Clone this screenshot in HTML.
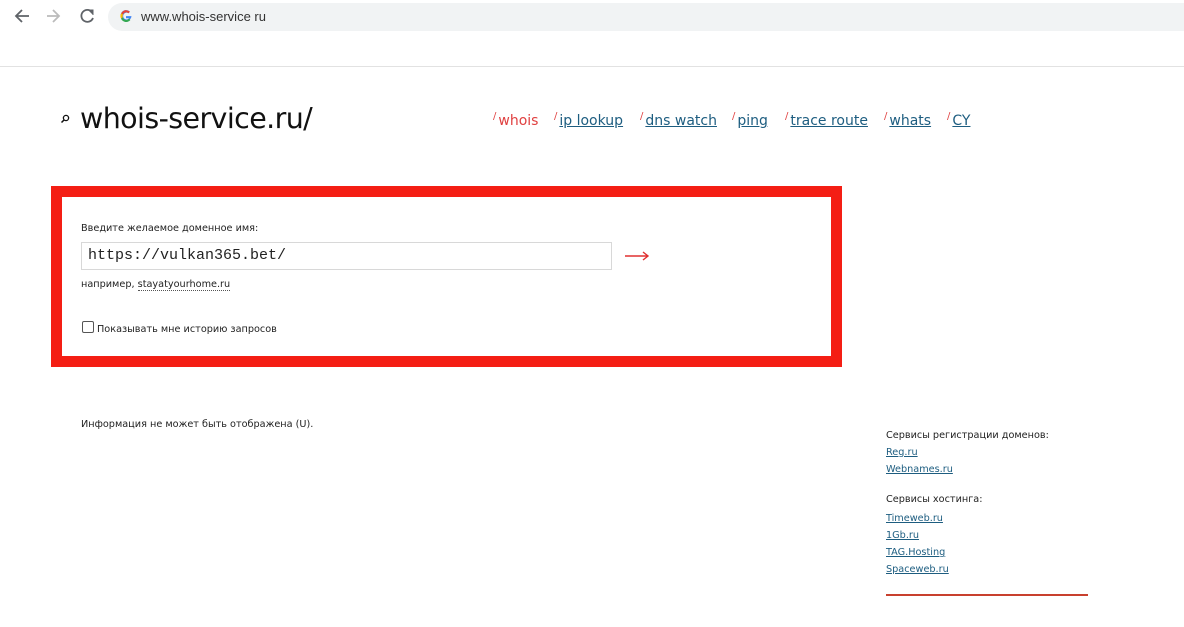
<!DOCTYPE html>
<html><head><meta charset="utf-8"><style>
*{margin:0;padding:0;box-sizing:border-box}
body{width:1184px;height:627px;background:#fff;position:relative;overflow:hidden;font-family:"DejaVu Sans","Liberation Sans",sans-serif;color:#222}
.abs{position:absolute}
a{color:#1d5d80;text-decoration:underline}
.bar{left:108px;top:3px;width:1090px;height:28px;border-radius:14px;background:#f1f3f4}
.url{left:141px;top:9px;font-family:"Liberation Sans",sans-serif;font-size:13px;color:#333}
.nav{top:111px;font-size:14px;font-family:"DejaVu Sans",sans-serif}
.nav span{color:#e04040;font-size:10px;vertical-align:6px;margin-right:2px}
.sm{font-size:9.7px;color:#222}
.side{left:886px;font-size:9.7px}
</style></head><body>
<svg class="abs" style="left:12px;top:6px" width="90" height="20" viewBox="0 0 90 20">
<path d="M17 10H5M10 4L4 10L10 16" fill="none" stroke="#5f6368" stroke-width="1.8"/>
<path d="M47 10H35M41 4L47 10L41 16" fill="none" stroke="#bbb" stroke-width="1.8"/>
<path d="M80 6A6 6 0 1 0 81 12" fill="none" stroke="#5f6368" stroke-width="1.8"/><path d="M76 4L81 4L81 9" fill="#5f6368" stroke="#5f6368" stroke-width="1"/>
</svg>
<div class="abs bar"></div>
<svg class="abs" style="left:119px;top:9px" width="14" height="14" viewBox="0 0 14 14">
<path d="M12.5 7.1H7v2.2h3.2A3.4 3.4 0 1 1 9.4 4.2l1.5-1.5A5.5 5.5 0 1 0 12.5 7.1z" fill="#4285f4"/>
<path d="M2.2 4.3L4 5.6A3.4 3.4 0 0 1 9.4 4.2l1.5-1.5A5.5 5.5 0 0 0 2.2 4.3z" fill="#ea4335"/>
<path d="M2 9.5L3.8 8.3A3.4 3.4 0 0 0 9.8 9.6l1.6 1.4A5.5 5.5 0 0 1 2 9.5z" fill="#34a853"/>
<path d="M2.2 4.3A5.5 5.5 0 0 0 2 9.5L3.8 8.3A3.4 3.4 0 0 1 4 5.6z" fill="#fbbc05"/>
</svg>
<div class="abs url">www.whois-service ru</div>
<div class="abs" style="left:0;top:66px;width:1184px;height:1px;background:#e2e2e2"></div>

<svg class="abs" style="left:60px;top:114px" width="10" height="10" viewBox="0 0 10 10"><circle cx="6" cy="4" r="2.6" fill="none" stroke="#111" stroke-width="1.3"/><path d="M4 6L1.5 8.5" stroke="#111" stroke-width="1.5"/></svg>
<div class="abs" style="left:80px;top:102px;font-size:28.5px;color:#111;font-family:'DejaVu Sans',sans-serif;letter-spacing:-0.6px">whois-service.ru/</div>

<div class="abs nav" style="left:493px;color:#e04040"><span>/</span>whois</div>
<div class="abs nav" style="left:554px"><span>/</span><a>ip lookup</a></div>
<div class="abs nav" style="left:640px"><span>/</span><a>dns watch</a></div>
<div class="abs nav" style="left:732px"><span>/</span><a>ping</a></div>
<div class="abs nav" style="left:785px"><span>/</span><a>trace route</a></div>
<div class="abs nav" style="left:884px"><span>/</span><a>whats</a></div>
<div class="abs nav" style="left:947px"><span>/</span><a>CY</a></div>

<div class="abs" style="left:51px;top:186px;width:791px;height:181px;border:11px solid #f41e14"></div>
<div class="abs sm" style="left:81px;top:223px">Введите желаемое доменное имя:</div>
<div class="abs" style="left:81px;top:242px;width:531px;height:28px;border:1px solid #d8d8d8;font-family:'Liberation Mono',monospace;font-size:15px;padding:4px 0 0 6px;color:#222">https://vulkan365.bet/</div>
<svg class="abs" style="left:624px;top:250px" width="26" height="12" viewBox="0 0 26 12"><path d="M1 6H24M19 2L24 6L19 10" fill="none" stroke="#e03030" stroke-width="1.4"/></svg>
<div class="abs sm" style="left:81px;top:279px">например, <span style="border-bottom:1px dotted #555">stayatyourhome.ru</span></div>
<div class="abs" style="left:82px;top:321px;width:12px;height:12px;border:1px solid #555;border-radius:2px"></div>
<div class="abs sm" style="left:97px;top:324px">Показывать мне историю запросов</div>

<div class="abs sm" style="left:81px;top:419px">Информация не может быть отображена (U).</div>

<div class="abs side" style="top:430px">Сервисы регистрации доменов:</div>
<div class="abs side" style="top:447px"><a>Reg.ru</a></div>
<div class="abs side" style="top:464px"><a>Webnames.ru</a></div>
<div class="abs side" style="top:494px">Сервисы хостинга:</div>
<div class="abs side" style="top:513px"><a>Timeweb.ru</a></div>
<div class="abs side" style="top:530px"><a>1Gb.ru</a></div>
<div class="abs side" style="top:547px"><a>TAG.Hosting</a></div>
<div class="abs side" style="top:564px"><a>Spaceweb.ru</a></div>
<div class="abs" style="left:886px;top:594px;width:202px;height:2px;background:#c8402e"></div>
</body></html>
